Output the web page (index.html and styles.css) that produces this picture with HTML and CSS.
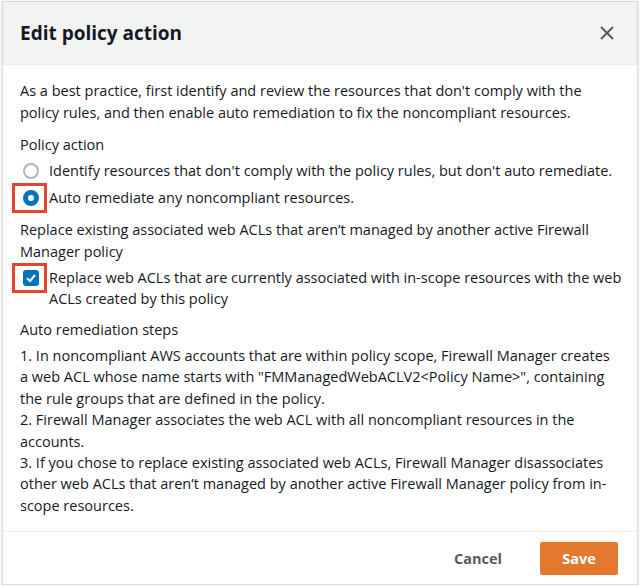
FILE: index.html
```html
<!DOCTYPE html>
<html lang="en">
<head>
  <meta charset="UTF-8" />
  <title>Edit policy action</title>
  <link rel="stylesheet" href="styles.css">
</head>
<body>
  <div class="modal">
    <div class="modal-header">
      <h2>Edit policy action</h2>
      <button class="close-btn" aria-label="Close">
        <svg width="16" height="16" viewBox="0 0 16 16"><path d="M2 2 L14 14 M14 2 L2 14" stroke="#545b64" stroke-width="2" fill="none"/></svg>
      </button>
    </div>

    <div class="modal-body">
      <p class="intro">As a best practice, first identify and review the resources that don't comply with the policy rules, and then enable auto remediation to fix the noncompliant resources.</p>

      <div class="field">
        <div class="label">Policy action</div>
        <label class="option">
          <span class="control"><span class="radio"></span></span>
          <span>Identify resources that don't comply with the policy rules, but don't auto remediate.</span>
        </label>
        <label class="option">
          <span class="control highlight"><span class="radio checked"></span></span>
          <span>Auto remediate any noncompliant resources.</span>
        </label>
      </div>

      <div class="field">
        <div class="label">Replace existing associated web ACLs that aren’t managed by another active Firewall Manager policy</div>
        <label class="option tight">
          <span class="control highlight">
            <span class="checkbox">
              <svg width="16" height="16" viewBox="0 0 16 16"><path d="M4 8.2 L7 11 L12 5" stroke="#fff" stroke-width="2" fill="none"/></svg>
            </span>
          </span>
          <span>Replace web ACLs that are currently associated with in-scope resources with the web ACLs created by this policy</span>
        </label>
      </div>

      <div class="field">
        <div class="label">Auto remediation steps</div>
        <div class="steps">
          1. In noncompliant AWS accounts that are within policy scope, Firewall Manager creates a web ACL whose name starts with "FMManagedWebACLV2&lt;Policy Name&gt;", containing the rule groups that are defined in the policy.<br>
          2. Firewall Manager associates the web ACL with all noncompliant resources in the accounts.<br>
          3. If you chose to replace existing associated web ACLs, Firewall Manager disassociates other web ACLs that aren’t managed by another active Firewall Manager policy from in-scope resources.
        </div>
      </div>
    </div>

    <div class="modal-footer">
      <button class="btn-link">Cancel</button>
      <button class="btn-primary">Save</button>
    </div>
  </div>
</body>
</html>
```

FILE: styles.css
```css
body {
  margin: 0;
  background-color: #fafafa;
  font-family: "Open Sans", Roboto, Arial, sans-serif;
  font-size: 14.5px;
  color: #16191f;
}

.modal {
  margin: 1px 2px 0 2px;
  width: 634px;
  background-color: #fff;
  border: 1px solid #d5dbdb;
  box-shadow: 0 1px 2px rgba(0, 0, 0, 0.15);
}

.modal-header {
  display: flex;
  align-items: center;
  justify-content: space-between;
  height: 62px;
  padding: 0 22px 0 17px;
  background-color: #f2f3f3;
  border-bottom: 1px solid #eaeded;
}

.modal-header h2 {
  margin: 0;
  font-size: 19px;
  font-weight: 700;
  color: #16191f;
}

.close-btn {
  background: none;
  border: none;
  padding: 0;
  display: flex;
  cursor: pointer;
}

.modal-body {
  padding: 15px 16px 15px 17px;
  line-height: 22px;
}

.intro {
  margin: 0;
}

.field {
  margin-top: 10px;
}

.label {
  margin-bottom: 4px;
}

.option {
  display: flex;
  align-items: flex-start;
  gap: 10px;
  margin-bottom: 5px;
}

.option.tight {
  line-height: 21px;
  margin-right: -8px;
}

.control {
  position: relative;
  flex: none;
  width: 16px;
  height: 22px;
  margin-left: 3px;
  display: flex;
  align-items: center;
}

.radio {
  box-sizing: border-box;
  width: 16px;
  height: 16px;
  border-radius: 50%;
  border: 2px solid #aab7b8;
  background-color: #fff;
}

.radio.checked {
  border: 5px solid #0073bb;
}

.checkbox {
  width: 16px;
  height: 16px;
  border-radius: 3px;
  background-color: #0073bb;
  display: flex;
}

.highlight::after {
  content: "";
  position: absolute;
  left: -11px;
  top: -4px;
  width: 29px;
  height: 24px;
  border: 3px solid #e5452f;
}

.steps {
  line-height: 21.4px;
}

.modal-footer {
  display: flex;
  justify-content: flex-end;
  align-items: center;
  gap: 32px;
  height: 52px;
  padding: 0 19px 0 0;
  border-top: 1px solid #eaeded;
}

.btn-link {
  background: none;
  border: none;
  font-family: inherit;
  font-size: 14.5px;
  font-weight: 700;
  color: #545b64;
  cursor: pointer;
}

.btn-primary {
  width: 78px;
  height: 33px;
  background-color: #e4782f;
  border: 1px solid #e4782f;
  border-radius: 2px;
  color: #fff;
  font-family: inherit;
  font-size: 14.5px;
  font-weight: 700;
  cursor: pointer;
}
```
